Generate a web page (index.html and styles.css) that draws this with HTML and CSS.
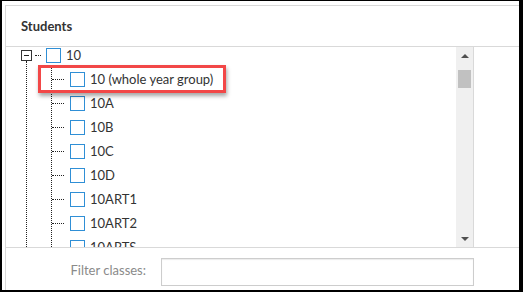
FILE: index.html
```html
<!DOCTYPE html>
<html>
<head>
<meta charset="utf-8">
<link rel="stylesheet" href="styles.css">
</head>
<body>
<div class="frame">
  <div class="panel">
    <div class="header">Students</div>
    <div class="body">
      <div class="tree-view">
        <div class="tree">
          <div class="tree-list">
            <div class="row">
              <span class="expander"></span>
              <span class="hconn"></span>
              <span class="check"></span>
              <span class="label">10</span>
            </div>
            <div class="group">
              <div class="children">
                <div class="row child"><span class="hconn-child"></span><span class="check"></span><span class="label">10 (whole year group)</span></div>
                <div class="row child"><span class="hconn-child"></span><span class="check"></span><span class="label">10A</span></div>
                <div class="row child"><span class="hconn-child"></span><span class="check"></span><span class="label">10B</span></div>
                <div class="row child"><span class="hconn-child"></span><span class="check"></span><span class="label">10C</span></div>
                <div class="row child"><span class="hconn-child"></span><span class="check"></span><span class="label">10D</span></div>
                <div class="row child"><span class="hconn-child"></span><span class="check"></span><span class="label">10ART1</span></div>
                <div class="row child"><span class="hconn-child"></span><span class="check"></span><span class="label">10ART2</span></div>
                <div class="row child"><span class="hconn-child"></span><span class="check"></span><span class="label">10ARTS</span></div>
                <div class="row child"><span class="hconn-child"></span><span class="check"></span><span class="label">10B1</span></div>
              </div>
            </div>
          </div>
        </div>
        <div class="scrollbar">
          <div class="sb-btn"><span class="arrow-up"></span></div>
          <div class="sb-track"><div class="sb-thumb"></div></div>
          <div class="sb-btn"><span class="arrow-down"></span></div>
        </div>
      </div>
    </div>
    <div class="footer">
      <label class="filter-label" for="filter">Filter classes:</label>
      <input id="filter" class="filter-input" type="text">
    </div>
  </div>
  <div class="highlight"></div>
</div>
</body>
</html>
```
FILE: styles.css
```css
* { box-sizing: border-box; }
html, body { margin: 0; padding: 0; background: #fff; }
body { font-family: Lato, "Open Sans", Arial, sans-serif; font-size: 13px; color: #333; }

.frame {
  position: relative;
  width: 523px;
  height: 292px;
  border-top: 1px solid #000;
  border-left: 2px solid #000;
  border-right: 4px solid #000;
  border-bottom: 2px solid #000;
  padding: 4px 0 0 3px;
  overflow: hidden;
}

.panel {
  height: 100%;
  border-top: 1px solid #d9d9d9;
  border-left: 1px solid #d9d9d9;
  display: flex;
  flex-direction: column;
}

.header {
  height: 41px;
  border-bottom: 1px solid #d9d9d9;
  padding-left: 15px;
  display: flex;
  align-items: center;
  font-weight: 700;
  font-size: 13px;
  color: #333;
}

.body {
  height: 201px;
  border-bottom: 1px solid #d9d9d9;
  display: flex;
}

.tree-view {
  width: 468px;
  height: 200px;
  border-right: 1px solid #d9d9d9;
  display: flex;
}

.tree {
  width: 450px;
  height: 200px;
  overflow: hidden;
  padding-left: 15px;
}

.tree-list { margin-top: -4px; }

.row {
  height: 24px;
  display: flex;
  align-items: center;
  white-space: nowrap;
}

.expander {
  width: 11px;
  height: 11px;
  border: 1px solid #333;
  display: flex;
  align-items: center;
  justify-content: center;
  flex: none;
}
.expander::after {
  content: "";
  width: 5px;
  height: 1px;
  background: #222;
}

.hconn {
  width: 6px;
  margin-left: 3px;
  border-top: 1px dotted #222;
  flex: none;
}

.check {
  width: 15px;
  height: 15px;
  border: 1px solid #2f8fd6;
  background: #fff;
  margin-left: 5px;
  flex: none;
}

.label { margin-left: 5px; color: #333; }

.group {
  margin-left: 5px;
  margin-top: -6px;
  padding-top: 6px;
  border-left: 1px dotted #222;
  padding-left: 24px;
}

.children { border-left: 1px dotted #222; }

.hconn-child {
  width: 12px;
  border-top: 1px dotted #222;
  flex: none;
}
.child .check { margin-left: 6px; }

.scrollbar {
  width: 17px;
  height: 200px;
  background: #f0f0f0;
  display: flex;
  flex-direction: column;
}
.sb-btn {
  height: 17px;
  display: flex;
  align-items: center;
  justify-content: center;
  flex: none;
}
.arrow-up {
  width: 0; height: 0;
  border-left: 4px solid transparent;
  border-right: 4px solid transparent;
  border-bottom: 4px solid #505050;
}
.arrow-down {
  width: 0; height: 0;
  border-left: 4px solid transparent;
  border-right: 4px solid transparent;
  border-top: 4px solid #505050;
}
.sb-track { flex: 1; padding: 6px 2px 0 2px; }
.sb-thumb { height: 18px; background: #c1c1c1; }

.footer {
  flex: 1;
  display: flex;
  align-items: flex-start;
  padding-top: 10px;
}
.filter-label {
  width: 140px;
  text-align: right;
  color: #8a8a8a;
  line-height: 16px;
  margin-top: 4px;
}
.filter-input {
  margin-left: 15px;
  width: 313px;
  height: 28px;
  border: 1px solid #cdcdcd;
  box-shadow: inset 0 1px 1px rgba(0,0,0,0.08);
  background: #fff;
  padding: 0 6px;
  font: inherit;
  outline: none;
}

.highlight {
  position: absolute;
  left: 36px;
  top: 64px;
  width: 188px;
  height: 28px;
  border: 3px solid #f24747;
  box-shadow: 1px 3px 4px rgba(0,0,0,0.35);
}
```
